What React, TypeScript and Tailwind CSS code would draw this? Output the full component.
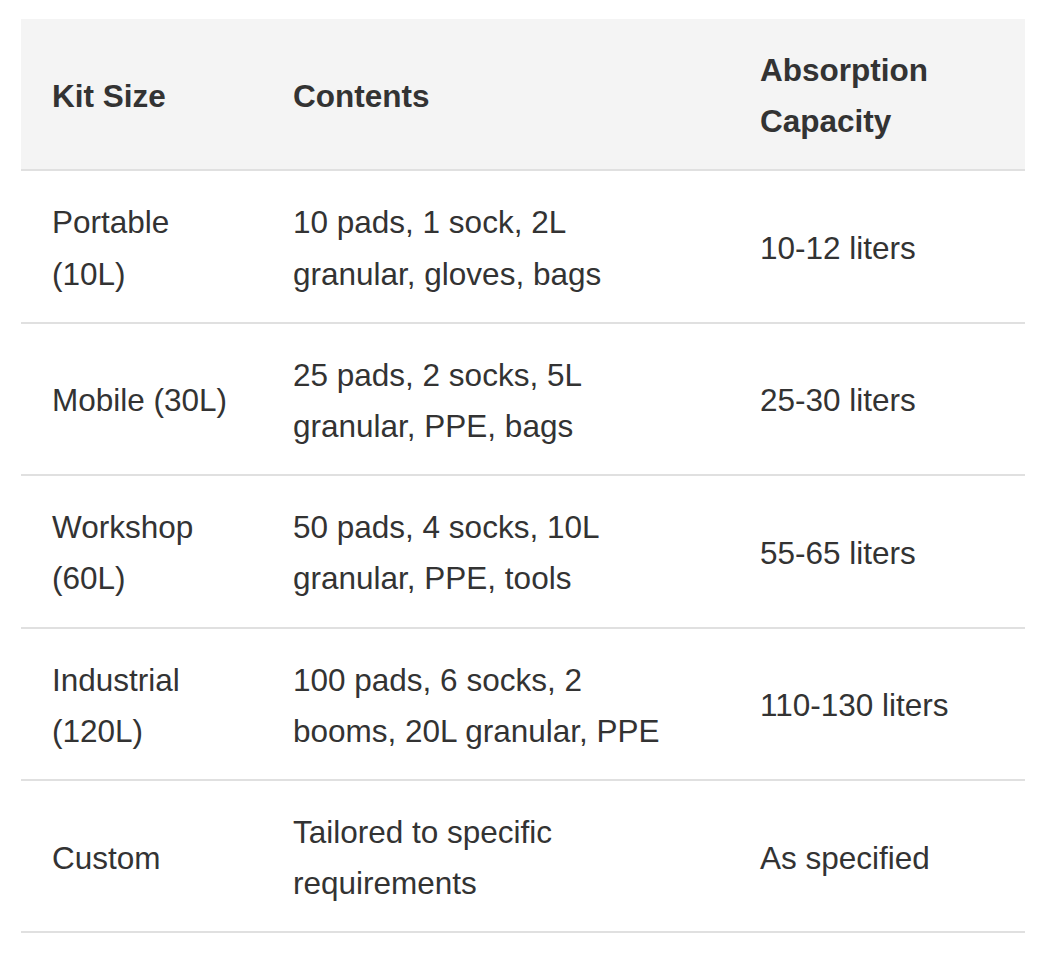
import React from 'react';

type Row = { size: string; contents: string; capacity: string };

const ROWS: Row[] = [
  { size: 'Portable (10L)', contents: '10 pads, 1 sock, 2L granular, gloves, bags', capacity: '10-12 liters' },
  { size: 'Mobile (30L)', contents: '25 pads, 2 socks, 5L granular, PPE, bags', capacity: '25-30 liters' },
  { size: 'Workshop (60L)', contents: '50 pads, 4 socks, 10L granular, PPE, tools', capacity: '55-65 liters' },
  { size: 'Industrial (120L)', contents: '100 pads, 6 socks, 2 booms, 20L granular, PPE', capacity: '110-130 liters' },
  { size: 'Custom', contents: 'Tailored to specific requirements', capacity: 'As specified' },
];

const cell = 'pl-[31px] pt-[26px] pb-[22px] text-left align-middle';

const App: React.FC = () => {
  return (
    <div
      className="min-h-screen bg-white pt-[19px] pl-[21px] text-[#333] text-[31.5px] leading-[51.2px]"
      style={{ fontFamily: '"Liberation Sans", Arial, Helvetica, sans-serif' }}
    >
      <table className="w-[1004px] table-fixed border-collapse">
        <colgroup>
          <col className="w-[241px]" />
          <col className="w-[467px]" />
          <col className="w-[296px]" />
        </colgroup>
        <thead>
          <tr className="bg-[#f4f4f4] border-b-2 border-[#e0e0e0]">
            <th className={`${cell} pr-6 font-bold`}>Kit Size</th>
            <th className={`${cell} pr-10 font-bold`}>Contents</th>
            <th className={`${cell} pr-6 font-bold`}>Absorption Capacity</th>
          </tr>
        </thead>
        <tbody>
          {ROWS.map((r) => (
            <tr key={r.size} className="border-b-2 border-[#e0e0e0]">
              <td className={`${cell} pr-6`}>{r.size}</td>
              <td className={`${cell} pr-10`}>{r.contents}</td>
              <td className={`${cell} pr-6`}>{r.capacity}</td>
            </tr>
          ))}
        </tbody>
      </table>
    </div>
  );
};

export default App;
